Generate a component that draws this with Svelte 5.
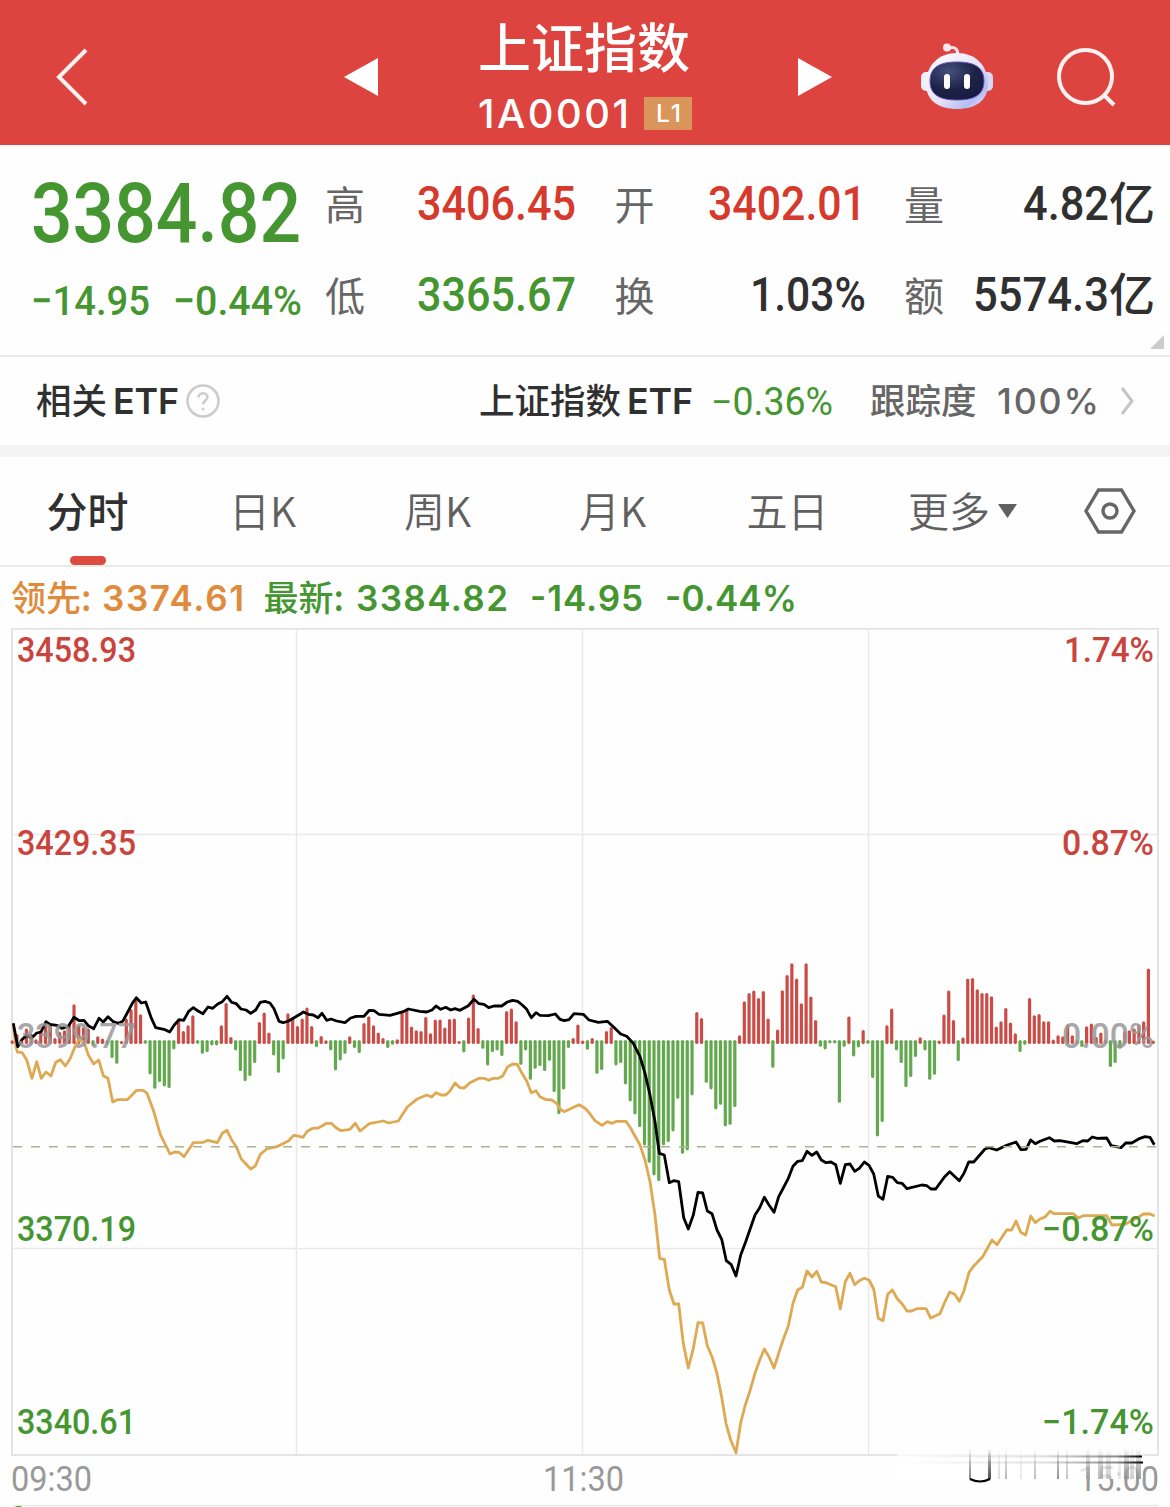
<script lang="ts">
	type Quote = { label: string; value: string; width: number; unit?: string; tone: string };

	const quotes: Quote[] = [
		{ label: '高', value: '3406.45', width: 159, tone: 'up' },
		{ label: '开', value: '3402.01', width: 158, tone: 'up' },
		{ label: '量', value: '4.82', width: 86, unit: '亿', tone: 'flat' },
		{ label: '低', value: '3365.67', width: 159, tone: 'down' },
		{ label: '换', value: '1.03%', width: 116, tone: 'flat' },
		{ label: '额', value: '5574.3', width: 136, unit: '亿', tone: 'flat' }
	];

	const tabs = ['分时', '日K', '周K', '月K', '五日', '更多'];
	let active = $state(0);

	const levels = [
		{ y: 662, price: '3458.93', pct: '1.74%', w: 90, tone: 'up' },
		{ y: 855, price: '3429.35', pct: '0.87%', w: 92, tone: 'up' },
		{ y: 1048, price: '3399.77', pct: '0.00%', w: 92, tone: 'mid' },
		{ y: 1241, price: '3370.19', pct: '−0.87%', w: 112, tone: 'down' },
		{ y: 1434, price: '3340.61', pct: '−1.74%', w: 112, tone: 'down' }
	];

	const times = [
		{ x: 11, label: '09:30' },
		{ x: 543, label: '11:30' },
		{ x: 1078, label: '15:00' }
	];

	// one value per minute, in thirds of a pixel
	const zero = 1042;
	const step = 4.754;
	const momentum = [
		5, 24, 4, 40, 25, 8, 35, 52, 55, 12,
		30, 35, 55, 113, 50, 45, 40, -12, 17, 10,
		-8, -48, -65, 3, 70, 98, 130, 83, -5, -97,
		-140, -120, -133, -138, -22, 68, 33, 50, 80, -5,
		-35, -30, -10, -10, 50, 117, 15, -25, -87, -117,
		-102, -63, 60, 88, 28, -40, -92, -52, 86, 73,
		48, 70, 103, 48, -15, 18, 5, -25, -85, -55,
		-35, 17, -18, -33, 57, 77, 50, 28, 12, -18,
		-8, 8, 88, 97, 46, 35, 33, 75, 26, 67,
		67, 43, 69, 70, 3, -31, 73, 142, 42, -20,
		-70, -30, -25, -42, 93, 100, 62, -68, -25, -113,
		-80, -72, -87, -56, -150, -216, -142, -18, 12, 52,
		4, -23, 12, -95, -84, 33, 45, -70, -63, -127,
		-178, -217, -255, -310, -362, -400, -417, -310, -300, -268,
		-170, -335, -325, -160, 90, 72, -122, -142, -202, -188,
		-253, -248, -195, 20, 122, 147, 154, 132, 153, 70,
		-77, 37, 155, 201, 236, 190, 116, 236, 136, 66,
		-14, -22, -4, -4, -182, -14, 76, -43, -16, 36,
		-5, -108, -283, -240, 50, 100, -25, -63, -135, -105,
		-45, 14, -25, -113, -98, 4, 82, 154, 66, -57,
		13, 190, 192, 158, 147, 147, 137, 46, 62, 102,
		58, 26, -30, -8, 132, 80, 84, 62, 62, 7,
		20, 17, 52, 20, 5, -15, 47, 55, 15, 28,
		8, -75, -63, -20, 33, 35, 40, 53, 62, 220,
		4
	];

	const price =
		'13.3,1023.3 17.7,1046.7 21.7,1040 26.7,1035 31.7,1038 36.7,1033 41,1032 46,1021.7 50,1024.3 56.7,1025.3 61.7,1028.3 68,1026.7 74,1017.3 79.3,1020.7 84,1020.3 88.3,1025.7 93.7,1028.7 99,1018.3 103.3,1022 108,1016.7 113.3,1021.7 118.3,1023.3 122.7,1021.3 126.7,1014 132.3,1003.3 136.3,997.7 141.3,1003 145.7,1002 151,1017.3 155.7,1027.7 165,1029.7 169.7,1032 174.3,1025 179,1019.7 183.7,1020.3 188.7,1011.3 193.3,1007.7 198,1011 203,1013.7 208,1007 212.7,1008.3 217.7,1004 222.3,1001.7 227,996.3 231.7,1002.3 236.3,1003.7 241,1009 246,1010 250.7,1013.3 255.7,1010 260.3,1002.3 265,1001.3 270,1003 274,1008.7 279,1021.3 283.3,1022.7 289,1020.7 ' +
		'300,1014.3 303.3,1012 308.3,1014.3 313.3,1015 318,1017.7 322,1013.3 326.7,1020.3 331,1019 336.7,1021 345,1022.7 350.7,1018 356,1016.3 364,1016.3 369.3,1010.3 374,1010.7 379,1014.3 390,1015.3 403.3,1011.7 408.3,1009 420,1011.3 426.7,1012 432,1010 436,1006 440.7,1009.3 445.7,1007.3 450.7,1010 455,1008.7 460,1010.3 468.3,1005.7 474,999.3 479,1003.7 484,1004.3 488.7,1007.7 494,1006 501.7,1006 507.3,1002 512.7,1000.3 517.7,1001.3 522.3,1005 526.7,1009.3 531.3,1017.7 536,1012.7 540,1015.3 548.3,1015.7 555.3,1014 560,1019.3 564.3,1020.7 569,1019.7 574,1013.7 583.3,1014.3 ' +
		'589,1020 598.3,1022.3 607.3,1021.3 613.3,1026.7 620.7,1034 626.7,1036.3 633.3,1043.3 640,1056.7 645,1073.3 650,1095 655,1121.7 659.3,1153.3 664.3,1155 669.3,1182.7 673.7,1180.7 678.7,1181.7 683.7,1217.7 688.3,1229 693.3,1215 698,1192.3 702.7,1193 707.3,1211 712,1213.7 717,1230 721.7,1239.3 726.3,1260.7 731.3,1264.7 736,1276 740.7,1255 745.7,1241.7 755,1215 759.7,1207.7 764.3,1197.3 769,1205 774,1212.3 778.7,1196.7 783.3,1188 788.3,1178.3 793,1166.3 797.7,1161.3 802.3,1160.7 807,1151.3 812,1155.3 816.7,1152 821.3,1160 826,1162.7 831,1162 835.7,1164.7 840.3,1183.3 845.3,1164.7 850,1164 854.7,1171.3 859.3,1168.3 864.3,1162 ' +
		'869,1165.3 873.7,1174 878.3,1196 883,1199.3 887.7,1176.3 892.7,1177.3 897.3,1182.7 902,1183.3 907,1188.7 921.7,1185 926.7,1185.7 931,1189 935.7,1189 944.7,1176.7 949.7,1171.7 959.3,1180.7 964,1173.3 968.7,1162 973.7,1162 985,1149 988.7,1147.7 996.7,1150 1006.7,1145.3 1016,1142 1021,1149.7 1026,1149.3 1030.7,1140 1035.3,1143.7 1040,1141.3 1049.3,1137.7 1054.3,1141 1060,1140.7 1076.7,1143.7 1082.7,1140.7 1087.7,1141 1092.3,1137 1097.3,1138.3 1106.7,1138 1111.3,1145.7 1121,1147.7 1125.7,1143 1131.7,1143 1140,1138.3 1145,1136.7 1150,1137.3 1154.3,1144.7';

	const leading =
		'13.3,1026 16,1047 17.3,1052 22.3,1052.7 26.7,1060 32,1078.3 36.7,1061.7 41.3,1078.3 46,1072 51,1076 55.7,1062.3 60.3,1059.7 65.3,1066 70,1059 75,1046.7 80,1038 85,1045 88.3,1055 93.7,1064 98.7,1060 103.3,1075.7 108,1078.3 112.7,1102 117.3,1099.7 127.3,1099.7 136.7,1090.3 143.3,1090.3 147,1093.3 153.3,1110 160.3,1134.3 170,1154 174.7,1152 179,1152.3 184,1156.7 193.3,1142.7 203.3,1142.3 208,1140.3 217.3,1142.7 222.3,1133.3 227,1130.3 231.7,1140 236.3,1146.7 241.3,1159 250.7,1169 255.3,1166 260.3,1154.3 266.7,1149 276.7,1146.7 288.3,1141 293.3,1135.7 ' +
		'295,1135.3 303,1137.3 307.3,1131.3 312.7,1128.3 318.3,1128 326.7,1123.3 331.3,1123.3 336,1127.7 341,1130.7 350,1129.3 355.3,1123.3 360,1131 369.3,1123.7 383.3,1121 388.7,1123 398.3,1121 407.3,1107 416.7,1099.3 426.7,1095 431.7,1097 436,1092.7 441,1095 445.7,1095 450,1091 455,1083 460,1087.7 464.3,1088 470,1082.7 479,1078.3 484,1078.3 488.7,1080.3 493.3,1078.3 498.3,1078.3 502.7,1076 507.7,1066.7 512.7,1064 517.3,1064.3 522,1073.3 526.7,1081 531.3,1092.7 536,1090.7 540,1096.7 545,1099.3 551.7,1100 556.7,1103.3 560,1109 564,1111.7 570,1109 579,1104.7 585,1108.3 ' +
		'588.3,1111.7 595,1120.7 602,1125.3 607.3,1121.7 612,1123.3 616.7,1121.3 626,1121.3 630.7,1128.3 640,1145 645,1160 650,1181.7 655,1215 659.7,1258.7 664.3,1259.3 669.3,1290 674,1304 678.7,1304 683.3,1343.3 688.3,1368 693.3,1348.3 698,1322.7 702.7,1323 707.3,1345.7 712,1356.7 716.7,1372.3 721.7,1397.3 726,1423.3 730.7,1440 736,1452.7 740.7,1422.7 745.3,1405 750,1390.7 755,1373.3 759.7,1360 764.3,1349 769,1356.7 774,1368 778.7,1353.3 783.3,1339.3 788.3,1326 793,1303.3 797.7,1290 802.3,1287.3 807,1271 812,1277 816.7,1271.3 821.3,1282 826,1282.7 835.7,1286.7 840.3,1309 845.3,1281.7 850,1273.3 854.7,1284.7 859.3,1280.7 864.3,1278.3 ' +
		'869,1280 873.7,1289 878.3,1318.3 883,1320.7 887.7,1294.3 892.3,1290 897.3,1298.7 902,1303.7 907,1311 911.7,1311 916.7,1308.7 926,1308.7 930.7,1318 940,1313.7 944.7,1302.3 949.7,1292 954.7,1294.3 959.3,1301.3 964,1290.7 969,1272.3 974,1265.7 982.7,1256.7 992,1240 997,1244.7 1006.7,1230 1011.7,1230 1016,1221 1020.7,1232.3 1025.7,1235 1030.7,1216 1035.3,1222.7 1040,1219 1045,1217 1050,1211.3 1054.3,1213.7 1073.3,1213.7 1078.3,1218 1083.3,1215.7 1106.7,1215.7 1112,1225 1125,1224.3 1138.3,1217.3 1143.3,1214 1150,1214 1154.7,1216';

	// faint streaks under the axis: x, width, opacity
	const streaks = [
		[969, 2, 0.5], [988, 3, 0.75], [998, 2, 0.15], [1005, 2, 0.3], [1020, 2, 0.1],
		[1034, 2, 0.28], [1057, 2, 0.45], [1066, 2, 0.25], [1086, 4, 0.35], [1098, 5, 0.28],
		[1106, 5, 0.2], [1118, 3, 0.1], [1124, 5, 0.4], [1130, 4, 0.2], [1136, 5, 0.4]
	];
</script>

<!-- text set to a width; the box is exactly as tall as the capitals -->
{#snippet fit(text: string, width: number, cap: number, face = 'din')}
	<svg class="fit {face}" {width} height={cap}>
		<text
			y={cap}
			font-size={cap / (face.startsWith('din') ? 0.711 : 0.727)}
			textLength={width}
			lengthAdjust={face.startsWith('din') ? 'spacingAndGlyphs' : 'spacing'}>{text}</text
		>
	</svg>
{/snippet}

<div class="screen">
	<header>
		<svg class="back" width="34" height="60" viewBox="0 0 34 60">
			<path d="M32 3 L5 30 L32 57" />
		</svg>
		<svg class="prev" width="34" height="40" viewBox="0 0 34 40"><path d="M34 1 V39 L0 20Z" /></svg>
		<div class="title">
			<h1>上证指数</h1>
			<div class="code">
				{@render fit('1A0001', 151, 29, 'sans')}
				<span class="badge">{@render fit('L1', 25, 18, 'sans')}</span>
			</div>
		</div>
		<svg class="next" width="34" height="40" viewBox="0 0 34 40"><path d="M0 1 V39 L34 20Z" /></svg>
		<svg class="robot" width="72" height="68" viewBox="0 0 72 68">
			<defs>
				<linearGradient id="shell" x1="0" y1="0" x2="1" y2="1">
					<stop offset="0" stop-color="#fff" />
					<stop offset=".55" stop-color="#e6e2f8" />
					<stop offset=".8" stop-color="#b4bdf0" />
					<stop offset="1" stop-color="#f3e9fa" />
				</linearGradient>
				<radialGradient id="visor" cx=".35" cy=".25" r=".8">
					<stop offset="0" stop-color="#46507c" />
					<stop offset=".6" stop-color="#1c2347" />
					<stop offset="1" stop-color="#171b40" />
				</radialGradient>
			</defs>
			<path d="M28 5 C35 3 37 7 37 13" fill="none" stroke="#fbe3e8" stroke-width="3" />
			<circle cx="26" cy="4.500" r="4" fill="#fbe8ec" />
			<rect x="0" y="29" width="12" height="19" rx="5" fill="#f2eef9" />
			<rect x="60" y="29" width="12" height="19" rx="5" fill="#d8d8f6" />
			<path
				d="M36 10 C54 10 67 22 67 41 C67 58 54 66 36 66 C18 66 5 58 5 41 C5 22 18 10 36 10Z"
				fill="url(#shell)"
			/>
			<path
				d="M36 19 C53 19 63 24 63 38 C63 52 53 57 36 57 C19 57 9 52 9 38 C9 24 19 19 36 19Z"
				fill="url(#visor)"
				stroke="#6a4fc0"
				stroke-width="1"
			/>
			<rect x="23" y="31" width="6" height="15" rx="3" fill="#fff" />
			<rect x="43" y="31" width="6" height="15" rx="3" fill="#fff" />
		</svg>
		<svg class="search" width="60" height="60" viewBox="0 0 60 60">
			<circle cx="29.500" cy="29.500" r="26.500" />
			<path d="M47.500 47.500 L58 58" />
		</svg>
	</header>

	<section class="summary">
		<div class="last down">
			{@render fit('3384.82', 270, 59)}
			<div class="change">
				{@render fit('−14.95', 119, 29.500)}
				{@render fit('−0.44%', 129, 29.500)}
			</div>
		</div>
		<div class="quotes">
			{#each quotes as q}
				<div class="quote">
					<span class="label">{q.label}</span>
					<span class="value {q.tone}">
						{@render fit(q.value, q.width, 34)}
						{#if q.unit}<span class="unit">{q.unit}</span>{/if}
					</span>
				</div>
			{/each}
		</div>
		<svg class="corner" width="14" height="14" viewBox="0 0 14 14"><path d="M14 0 V14 H0Z" /></svg>
	</section>

	<section class="etf">
		<span class="cjk">相关</span>
		{@render fit('ETF', 66, 26, 'sans strong')}
		<svg class="help" width="34" height="34" viewBox="0 0 34 34">
			<circle cx="17" cy="17" r="15.500" />
			<path d="M12.500 13.500 C12.500 8 21.500 8 21.500 13 C21.500 16.500 17 16.500 17 20.500" />
			<circle class="dot" cx="17" cy="25" r="1.500" />
		</svg>
		<span class="cjk fund">上证指数</span>
		{@render fit('ETF', 66, 26, 'sans strong')}
		<span class="down rate">{@render fit('−0.36%', 122, 27, 'din thin')}</span>
		<span class="cjk track">跟踪度</span>
		<span class="full">{@render fit('100%', 102, 26, 'sans')}</span>
		<svg class="more" width="16" height="30" viewBox="0 0 16 30"><path d="M3 2 L13 15 L3 28" /></svg>
	</section>

	<nav>
		{#each tabs as tab, i}
			<button class:active={active === i} onclick={() => (active = i)}>
				{tab}
				{#if tab === '更多'}
					<svg class="caret" width="19" height="14" viewBox="0 0 19 14"><path d="M0 0 H19 L9.500 14Z" /></svg>
				{/if}
			</button>
		{/each}
		<svg class="gear" width="52" height="46" viewBox="0 0 52 46">
			<path d="M14.500 2 H37.500 L50 23 L37.500 44 H14.500 L2 23Z" />
			<circle cx="26" cy="23" r="7" />
		</svg>
	</nav>

	<div class="legend">
		<span class="lead word">领先:</span>
		<span class="lead first">{@render fit('3374.61', 142, 25.500, 'sans')}</span>
		<span class="down word newest">最新:</span>
		<span class="down legend-values">
			{@render fit('3384.82', 152, 25.500, 'sans')}
			{@render fit('-14.95', 113, 25.500, 'sans')}
			{@render fit('-0.44%', 132, 25.500, 'sans')}
		</span>
	</div>

	<svg class="chart" width="1170" height="879" viewBox="0 628 1170 879">
		<defs>
			<linearGradient id="fade" x1="0" y1="0" x2="0" y2="1">
				<stop offset="0" stop-color="#222" stop-opacity="0" />
				<stop offset=".6" stop-color="#222" stop-opacity=".75" />
				<stop offset="1" stop-color="#111" />
			</linearGradient>
			<linearGradient id="rule" x1="0" y1="0" x2="1" y2="0">
				<stop offset="0" stop-color="#000" stop-opacity="0" />
				<stop offset=".6" stop-color="#000" stop-opacity=".12" />
				<stop offset=".9" stop-color="#000" stop-opacity=".45" />
				<stop offset="1" stop-color="#000" />
			</linearGradient>
		</defs>

		<g class="grid">
			<path d="M296.500 629 V1454 M582.500 629 V1454 M868.500 629 V1454" />
			<path d="M12 834.500 H1158 M12 1042 H1158 M12 1248.500 H1158" />
			<path class="frame" d="M12 628.700 H1158 V1455 H12Z" />
			<path d="M12 1505.500 H1158" />
		</g>

		<g class="bars">
			{#each momentum as value, i}
				<line
					class={value > 0 ? 'rise' : 'fall'}
					x1={12.2 + i * step}
					x2={12.2 + i * step}
					y1={value > 0 ? zero + 0.5 : zero - 0.5}
					y2={zero - value / 3 + (value > 0 ? 1.5 : -1.5)}
				/>
			{/each}
		</g>

		<polyline class="leading" points={leading} />
		<polyline class="price" points={price} />
		<line class="latest" x1="13" x2="1157" y1="1146.700" y2="1146.700" />

		{#each levels as level}
			<g class="level {level.tone}">
				<text x="17" y={level.y} textLength="119" lengthAdjust="spacingAndGlyphs">{level.price}</text>
				<text x={1154 - level.w} y={level.y} textLength={level.w} lengthAdjust="spacingAndGlyphs"
					>{level.pct}</text
				>
			</g>
		{/each}

		{#each times as t}
			<text class="time" x={t.x} y="1491" textLength="81" lengthAdjust="spacingAndGlyphs">{t.label}</text>
		{/each}

		<g class="smear">
			<rect x="897" y="1452" width="246" height="27" fill="#fff" opacity=".75" />
			<rect x="897" y="1455.500" width="245" height="2" fill="url(#rule)" />
			<rect x="897" y="1461.500" width="246" height="2" fill="url(#rule)" />
			{#each streaks as [x, w, opacity]}
				<rect {x} y="1448" width={w} height="31" fill="url(#fade)" {opacity} />
			{/each}
			<path d="M970 1479 Q980 1484 990 1479" fill="none" stroke="#000" stroke-width="2" />
		</g>
		<ellipse cx="18.500" cy="1508" rx="4" ry="2" fill="#4a9636" />
	</svg>
</div>

<style>
	:global(body) {
		margin: 0;
		background: #fff;
	}

	.screen {
		width: 1170px;
		height: 1507px;
		overflow: hidden;
		background: #fefefe;
		font-family: 'Noto Sans CJK SC', sans-serif;
		color: #303030;
	}

	svg {
		display: block;
		flex: none;
	}

	.fit {
		overflow: visible;
		fill: currentColor;
	}

	.din {
		font-family: Roboto, sans-serif;
		font-weight: 500;
	}

	.din.thin {
		font-weight: 400;
	}

	.sans {
		font-family: Inter, sans-serif;
		font-weight: 500;
	}

	.sans.strong {
		font-weight: 600;
	}

	.up {
		color: #d63a2d;
		fill: #c8443d;
	}

	.down {
		color: #459630;
		fill: #459630;
	}

	.flat {
		color: #303030;
	}

	header {
		display: flex;
		align-items: center;
		height: 145px;
		padding: 0 54px;
		box-sizing: border-box;
		background: #dd433f;
		color: #fff;
	}

	.back,
	.search {
		fill: none;
		stroke: #fff1ef;
		stroke-width: 4;
		margin-top: 9px;
	}

	.prev,
	.next {
		fill: #fff;
		margin-top: 9px;
	}

	.prev {
		margin-left: 256px;
	}

	.title {
		width: 214px;
		margin-left: 100px;
	}

	h1 {
		margin: 0;
		height: 83px;
		font-size: 53px;
		line-height: 63px;
		font-weight: 500;
		white-space: nowrap;
	}

	.code {
		display: flex;
		align-items: center;
		gap: 15px;
		height: 33px;
		margin-bottom: 2px;
	}

	.badge {
		display: flex;
		align-items: center;
		justify-content: center;
		width: 48px;
		height: 33px;
		background: #d9955a;
	}

	.next {
		margin-left: 106px;
	}

	.robot {
		margin: 9px 0 0 89px;
	}

	.search {
		margin-left: 63px;
	}

	.summary {
		position: relative;
		display: flex;
		height: 210px;
		border-bottom: 2px solid #eaeaea;
	}

	.last {
		width: 294px;
		padding: 38px 0 0 31px;
	}

	.change {
		display: flex;
		justify-content: space-between;
		width: 271px;
		margin-top: 43px;
	}

	.quotes {
		display: grid;
		grid-template-columns: repeat(3, 251px);
		grid-template-rows: 91px 91px;
		column-gap: 38.5px;
		padding-top: 12px;
	}

	.quote,
	.value {
		display: flex;
		align-items: center;
	}

	.quote {
		justify-content: space-between;
	}

	.label {
		font-size: 40px;
		line-height: 50px;
		color: #666;
	}

	.unit {
		padding-bottom: 6px;
		font-size: 46px;
		line-height: 50px;
		font-weight: 500;
	}

	.corner {
		position: absolute;
		right: 6px;
		bottom: 6px;
		fill: #ccc;
	}

	.etf {
		display: flex;
		align-items: center;
		height: 88px;
		padding-left: 36px;
		border-bottom: 12px solid #f4f4f4;
	}

	.cjk {
		margin-right: 6px;
		padding-bottom: 4px;
		font-size: 35.5px;
		line-height: 50px;
		font-weight: 500;
		white-space: nowrap;
	}

	.help {
		margin-left: 7px;
		fill: none;
		stroke: #ccc;
		stroke-width: 2.6;
	}

	.help .dot {
		fill: #ccc;
		stroke: none;
	}

	.fund {
		margin-left: 259px;
	}

	.rate {
		margin-left: 18px;
	}

	.track {
		margin: 0 20px 0 37px;
		color: #666;
	}

	.full {
		color: #666;
	}

	.more {
		margin-left: 20px;
		fill: none;
		stroke: #c4c4c4;
		stroke-width: 3;
	}

	nav {
		display: grid;
		grid-template-columns: repeat(6, 175px) 1fr;
		height: 108px;
		border-bottom: 2px solid #eaeaea;
	}

	button {
		position: relative;
		display: flex;
		align-items: center;
		justify-content: center;
		gap: 8px;
		padding: 0 0 4px;
		border: 0;
		background: none;
		font: 350 41px/60px 'Noto Sans CJK SC', sans-serif;
		color: #606060;
		cursor: pointer;
	}

	button.active {
		font-weight: 500;
		color: #303030;
	}

	button.active::after {
		content: '';
		position: absolute;
		bottom: 0;
		width: 36px;
		height: 9px;
		border-radius: 5px;
		background: #dd4a3f;
	}

	.caret {
		margin-top: 4px;
		fill: #606060;
	}

	.gear {
		align-self: center;
		justify-self: center;
		fill: none;
		stroke: #666;
		stroke-width: 3.4;
	}

	.legend {
		display: flex;
		align-items: center;
		height: 61px;
		padding-left: 11px;
		font-size: 35px;
		line-height: 50px;
		font-weight: 500;
	}

	.word {
		padding-bottom: 4px;
	}

	.legend .sans {
		font-weight: 600;
	}

	.lead {
		color: #e08a3c;
	}

	.first {
		margin-left: 11px;
	}

	.newest {
		margin-left: 19px;
	}

	.legend-values {
		display: flex;
		gap: 22px;
		margin-left: 12px;
	}

	.grid path {
		fill: none;
		stroke: #e9e9e9;
		stroke-width: 1.5;
	}

	.grid .frame {
		stroke: #e4e4e4;
		stroke-width: 2;
	}

	.bars line {
		stroke-width: 3.2;
		stroke-linecap: round;
	}

	.rise {
		stroke: #cb4c46;
	}

	.fall {
		stroke: #62a84c;
	}

	polyline {
		fill: none;
		stroke-width: 2.8;
		stroke-linejoin: round;
	}

	.leading {
		stroke: #dfa852;
	}

	.price {
		stroke: #000;
	}

	.latest {
		stroke: #aeb294;
		stroke-width: 1.4;
		stroke-dasharray: 9 9;
	}

	.level text,
	.time {
		font-family: Roboto, sans-serif;
		font-size: 35px;
		font-weight: 500;
	}

	.level.mid {
		fill: #999;
		opacity: 0.85;
	}

	.time {
		fill: #999;
		font-weight: 400;
	}
</style>
